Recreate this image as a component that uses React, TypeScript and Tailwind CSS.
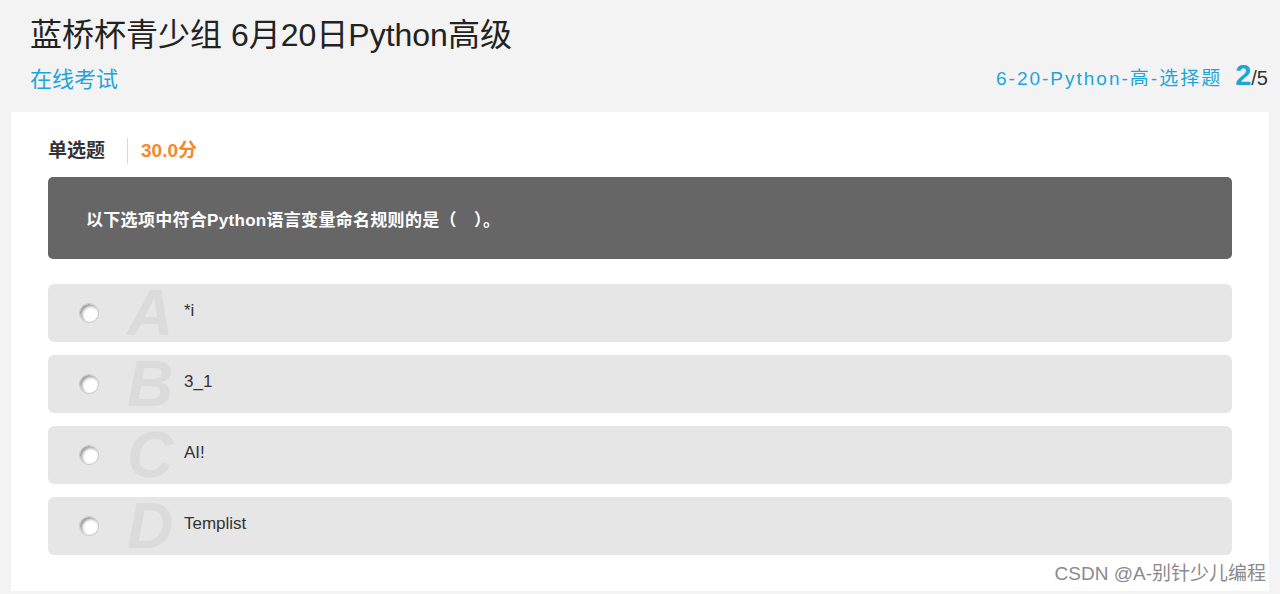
const font = { fontFamily: '"Liberation Sans", "Noto Sans CJK SC", sans-serif' }

const options = [
  { key: 'A', text: '*i' },
  { key: 'B', text: '3_1' },
  { key: 'C', text: 'AI!' },
  { key: 'D', text: 'Templist' },
]

function Radio() {
  return (
    <span className="block h-[20px] w-[20px] rounded-full border border-[#c8c8c8] bg-white shadow-[inset_2px_2px_3px_rgba(0,0,0,0.4)]" />
  )
}

export default function App() {
  return (
    <div className="relative h-[594px] w-[1280px] overflow-hidden bg-[#f3f3f3] text-[#333]" style={font}>
      <header className="pl-[30px] pr-[12px] pt-[16px]">
        <h1 className="text-[32px] leading-[38px] text-[#222]">蓝桥杯青少组 6月20日Python高级</h1>
        <div className="mt-[12px] flex h-[28px] items-center justify-between">
          <span className="text-[22px] leading-[28px] text-[#1ea5d8]">在线考试</span>
          <div className="flex -translate-y-[5px] items-baseline gap-[13px] leading-none">
            <span className="text-[19px] tracking-[2px] text-[#1ea5d8]">6-20-Python-高-选择题</span>
            <span className="text-[20px] text-[#333]">
              <span className="text-[29px] font-bold text-[#1ea5d8]">2</span>/5
            </span>
          </div>
        </div>
      </header>

      <main className="mx-[11px] mt-[18px] h-[479px] bg-white px-[37px] pt-[26px]">
        <div className="flex h-[26px] items-center">
          <span className="pr-[22px] text-[19px] font-bold text-[#333]">单选题</span>
          <span className="h-[26px] w-px bg-[#d8d8d8]" />
          <span className="pl-[13px] text-[19px] font-bold text-[#f4892b]">30.0分</span>
        </div>

        <div className="mt-[13px] flex h-[82px] items-center rounded-[5px] bg-[#666] pl-[38px] pt-[6px] text-[17px] font-bold tracking-[0.3px] text-white">
          以下选项中符合Python语言变量命名规则的是（　）。
        </div>

        <div className="mt-[25px] flex flex-col gap-[13px]">
          {options.map((o) => (
            <div key={o.key} className="flex h-[58px] items-center rounded-[6px] bg-[#e6e6e6]">
              <div className="pl-[31px]">
                <Radio />
              </div>
              <span className="ml-[28px] w-[57px] text-[64px] font-bold italic leading-none text-[#dbdbdb]">
                {o.key}
              </span>
              <span className="-translate-y-[2px] text-[17px] text-[#333]">{o.text}</span>
            </div>
          ))}
        </div>
      </main>

      <div className="absolute bottom-[6px] right-[14px] text-[19px] text-[#8a8a8a] [text-shadow:0_0_2px_#fff]">
        CSDN @A-别针少儿编程
      </div>
    </div>
  )
}
